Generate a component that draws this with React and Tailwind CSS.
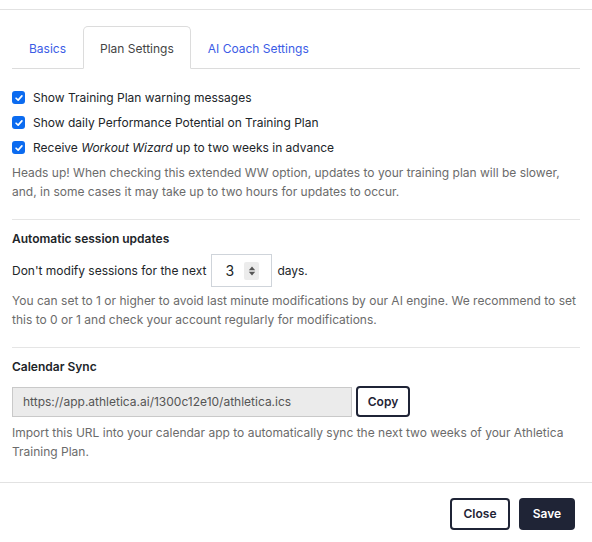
import { useState } from 'react';

const font = { fontFamily: 'Inter, "Liberation Sans", sans-serif' };

function CheckRow({ children, checked = true }) {
  return (
    <label className="flex items-center gap-2 h-[25px] text-[12px] text-[#212529]">
      <span className="w-[13px] h-[13px] rounded-[3px] bg-[#0b6bf0] flex items-center justify-center shrink-0">
        {checked && (
          <svg viewBox="0 0 12 12" className="w-[10px] h-[10px]" fill="none" stroke="white" strokeWidth="2" strokeLinecap="round" strokeLinejoin="round">
            <path d="M2.5 6.3 5 8.6 9.5 3.5" />
          </svg>
        )}
      </span>
      <span>{children}</span>
    </label>
  );
}

export default function App() {
  const [tab] = useState('plan');
  const [days] = useState(3);

  return (
    <div style={font} className="w-[592px] h-[542px] bg-white pt-[9px] text-[12px] text-[#212529]">
      <div className="border-t border-[#e2e2e2]" />

      <div className="px-3 pt-4">
        {/* tabs */}
        <div className="flex border-b border-[#dcdcdc] h-[43px]">
          {[
            ['basics', 'Basics'],
            ['plan', 'Plan Settings'],
            ['ai', 'AI Coach Settings'],
          ].map(([key, label]) => (
            <div
              key={key}
              className={
                key === tab
                  ? 'px-[16px] pt-[3px] flex items-center border border-[#dcdcdc] border-b-white -mb-px rounded-t-[5px] bg-white text-[#444]'
                  : 'px-[17px] pt-[3px] flex items-center text-[#3b5ce6]'
              }
            >
              {label}
            </div>
          ))}
        </div>

        <div className="pt-[16px]">
          <CheckRow>Show Training Plan warning messages</CheckRow>
          <CheckRow>Show daily Performance Potential on Training Plan</CheckRow>
          <CheckRow>
            Receive <i>Workout Wizard</i> up to two weeks in advance
          </CheckRow>
          <p className="text-[#6b6b6b] leading-[19px] mt-[3px]">
            Heads up! When checking this extended WW option, updates to your training plan will be slower, and, in some cases it may take up to two hours for updates to occur.
          </p>
        </div>

        <div className="border-t border-[#e5e5e5] mt-[18px] mb-[10px]" />

        <div>
          <div className="font-semibold leading-[18px]">Automatic session updates</div>
          <div className="flex items-center gap-[5px] mt-[6px]">
            <span>Don't modify sessions for the next</span>
            <div className="w-[61px] h-[33px] border border-[#cfd4da] flex items-center justify-between pl-[13px] pr-[12px]">
              <span className="text-[14px]">{days}</span>
              <span className="w-[15px] h-[18px] bg-[#ececec] rounded-[2px] flex items-center justify-center">
                <svg viewBox="0 0 10 14" className="w-[8px] h-[12px]" fill="#555">
                  <path d="M5 1.5 9 6H1Z" />
                  <path d="M5 12.5 9 8H1Z" />
                </svg>
              </span>
            </div>
            <span>days.</span>
          </div>
          <p className="text-[#6b6b6b] leading-[19px] mt-[4px]">
            You can set to 1 or higher to avoid last minute modifications by our AI engine. We recommend to set this to 0 or 1 and check your account regularly for modifications.
          </p>
        </div>

        <div className="border-t border-[#e5e5e5] mt-[18px] mb-[10px]" />

        <div>
          <div className="font-semibold leading-[18px]">Calendar Sync</div>
          <div className="flex items-center gap-[4px] mt-[10px]">
            <div className="w-[340px] h-[30px] bg-[#ebebeb] border border-[#c9c9c9] flex items-center px-[10px] text-[#555]">
              https://app.athletica.ai/1300c12e10/athletica.ics
            </div>
            <button className="h-[31px] w-[54px] border-2 border-[#1f2436] rounded-[4px] font-semibold text-[#1f2436]">
              Copy
            </button>
          </div>
          <p className="text-[#6b6b6b] leading-[19px] mt-[6px]">
            Import this URL into your calendar app to automatically sync the next two weeks of your Athletica Training Plan.
          </p>
        </div>
      </div>

      <div className="border-t border-[#e2e2e2] mt-[21px] flex justify-end gap-[9px] px-[17px] pt-[15px]">
        <button className="h-[32px] w-[60px] border-2 border-[#1f2436] rounded-[4px] font-semibold text-[#1f2436]">
          Close
        </button>
        <button className="h-[32px] w-[56px] bg-[#1f2436] rounded-[4px] font-semibold text-white">
          Save
        </button>
      </div>
    </div>
  );
}
